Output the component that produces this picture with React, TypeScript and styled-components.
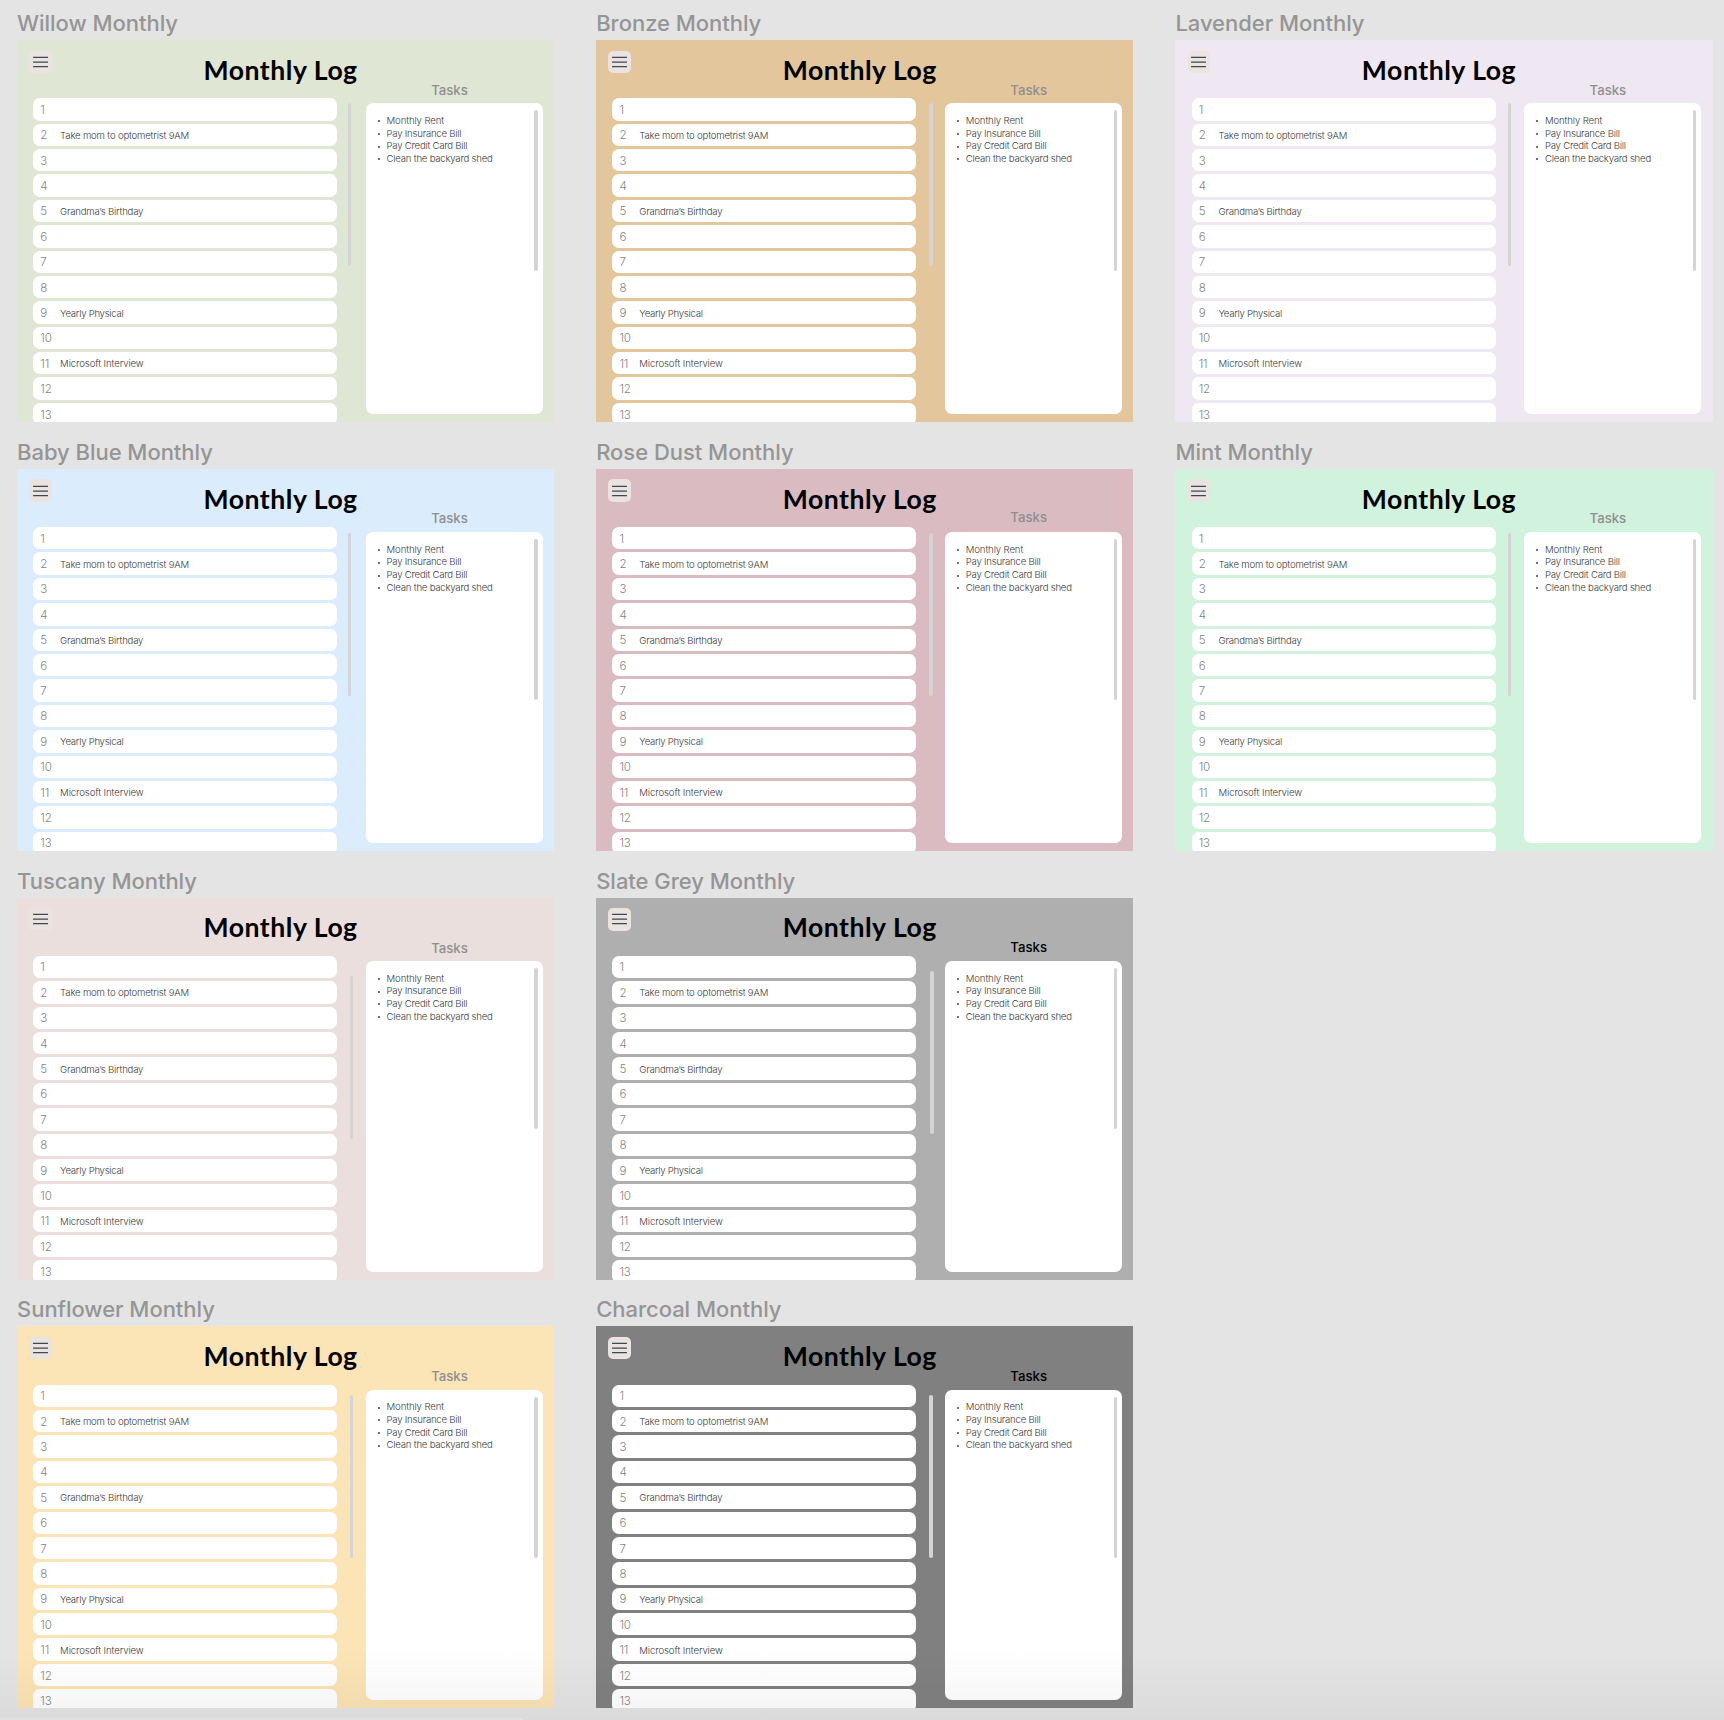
import React from "react";
import styled, { createGlobalStyle } from "styled-components";

const GlobalStyle = createGlobalStyle`
  * { box-sizing: border-box; }
  html, body { margin: 0; background: #e4e4e4; }
  body { overflow: hidden; font-family: Inter, "Liberation Sans", sans-serif; }
`;

interface Theme {
  name: string;
  color: string;
  button?: string;
  tasksColor?: string;
  tasksTop: number;
  barLeft: number;
  barTop: number;
}

const columns: Theme[][] = [
  [
    { name: "Willow Monthly", color: "#e0e6d4", tasksTop: -1, barLeft: 10.8, barTop: 5 },
    { name: "Baby Blue Monthly", color: "#dbecfd", tasksTop: -2, barLeft: 10.8, barTop: 6 },
    { name: "Tuscany Monthly", color: "#ebdfdd", tasksTop: -1, barLeft: 12.7, barTop: 20.2 },
    { name: "Sunflower Monthly", color: "#fbe4b5", tasksTop: -1, barLeft: 12.7, barTop: 10 },
  ],
  [
    { name: "Bronze Monthly", color: "#e3c69c", tasksTop: -1, barLeft: 12.7, barTop: 5 },
    { name: "Rose Dust Monthly", color: "#dabbc1", tasksTop: -2.7, barLeft: 12.7, barTop: 6.3 },
    { name: "Slate Grey Monthly", color: "#afafaf", tasksColor: "#000", tasksTop: -2, barLeft: 14, barTop: 15.2 },
    { name: "Charcoal Monthly", color: "#808080", tasksColor: "#000", tasksTop: -1, barLeft: 12.7, barTop: 10 },
  ],
  [
    { name: "Lavender Monthly", color: "#efe8f3", button: "#ebe4df", tasksTop: -1, barLeft: 12.4, barTop: 5 },
    { name: "Mint Monthly", color: "#d1f2dc", tasksTop: -2, barLeft: 12.4, barTop: 6 },
  ],
];

const entries: Record<number, { text: string; spacing: number }> = {
  2: { text: "Take mom to optometrist 9AM", spacing: -0.19 },
  5: { text: "Grandma’s Birthday", spacing: -0.2 },
  9: { text: "Yearly Physical", spacing: -0.27 },
  11: { text: "Microsoft Interview", spacing: -0.1 },
};

const tasks = [
  { text: "Monthly Rent", spacing: -0.12 },
  { text: "Pay Insurance Bill", spacing: -0.23 },
  { text: "Pay Credit Card Bill", spacing: -0.24 },
  { text: "Clean the backyard shed", spacing: -0.22 },
];

const Canvas = styled.main`
  position: relative;
  width: 1724px;
  height: 1720px;
  overflow: hidden;
  display: flex;
  align-items: flex-start;
  gap: 42px;
  padding: 8px 0 0 17px;
`;

const Column = styled.div`
  display: flex;
  flex-direction: column;
  gap: 14.8px;
  width: 537.2px;
  flex: none;
`;

const Board = styled.section`
  height: 414px;
`;

const BoardName = styled.h2`
  margin: 0;
  height: 32px;
  line-height: 30px;
  font-size: 22px;
  font-weight: 450;
  letter-spacing: -0.03px;
  color: #959595;
  white-space: nowrap;
`;

const Frame = styled.div<{ $color: string }>`
  height: 382px;
  overflow: hidden;
  background: ${(p) => p.$color};
  display: flex;
  flex-direction: column;
`;

const Header = styled.header`
  flex: none;
  height: 58.2px;
  display: flex;
  padding: 10.5px 0 0 12.2px;
`;

const MenuButton = styled.button<{ $color: string }>`
  width: 22.6px;
  height: 22.6px;
  padding: 0;
  border: 0;
  border-radius: 5px;
  background: ${(p) => p.$color};
  display: grid;
  place-items: center;
`;

const Title = styled.h1`
  margin: -0.8px 0 0 151.7px;
  font-family: Lato, sans-serif;
  font-size: 26.6px;
  font-weight: 700;
  line-height: 40px;
  letter-spacing: 0.52px;
  color: #000;
  white-space: nowrap;
`;

const Content = styled.div`
  display: flex;
  padding-left: 16.3px;
`;

const Days = styled.ol`
  list-style: none;
  margin: 0;
  padding: 0;
  width: 304px;
  flex: none;
  display: flex;
  flex-direction: column;
  gap: 3px;
`;

const Day = styled.li`
  height: 22.4px;
  flex: none;
  border-radius: 7px;
  background: #fff;
  display: flex;
  align-items: center;
  padding: 1px 0 0 7px;
`;

const DayNumber = styled.span`
  width: 19.8px;
  font-size: 11.6px;
  font-weight: 300;
  letter-spacing: -0.2px;
  color: #858585;
`;

const Entry = styled.span<{ $spacing: number }>`
  font-size: 9.6px;
  font-weight: 300;
  letter-spacing: ${(p) => p.$spacing}px;
  color: #3c3c3c;
  white-space: nowrap;
`;

const ScrollBar = styled.div<{ $left: number; $top: number; $height: number }>`
  flex: none;
  width: 3.4px;
  height: ${(p) => p.$height}px;
  margin: ${(p) => p.$top}px 0 0 ${(p) => p.$left}px;
  border-radius: 2px;
  background: #d4d4d4;
`;

const ListArea = styled.div`
  width: 332.7px;
  flex: none;
  display: flex;
`;

const TasksArea = styled.div`
  width: 177px;
  margin-top: -16.2px;
`;

const TasksHeading = styled.h3<{ $top: number; $color: string }>`
  margin: ${(p) => p.$top}px 0 ${(p) => -p.$top}px;
  padding-right: 10px;
  height: 21.2px;
  line-height: 18px;
  text-align: center;
  font-size: 13.2px;
  font-weight: 500;
  color: ${(p) => p.$color};
`;

const TasksPanel = styled.div`
  width: 177px;
  height: 310.8px;
  border-radius: 7px;
  background: #fff;
  display: flex;
  justify-content: space-between;
  padding: 0 5.2px 0 12px;
`;

const TaskList = styled.ul`
  list-style: none;
  margin: 11.8px 0 0;
  padding: 0;
`;

const Task = styled.li<{ $spacing: number }>`
  height: 12.7px;
  line-height: 12.7px;
  display: flex;
  align-items: center;
  font-size: 9.6px;
  font-weight: 300;
  letter-spacing: ${(p) => p.$spacing}px;
  color: #3c3c3c;
  white-space: nowrap;

  &::before {
    content: "";
    width: 2px;
    height: 2px;
    margin-right: 6.6px;
    border-radius: 50%;
    background: #444;
  }
`;

const BottomShade = styled.div`
  position: absolute;
  inset: auto 0 0 0;
  height: 70px;
  background: linear-gradient(to bottom, rgba(0, 0, 0, 0), rgba(0, 0, 0, 0.045));
  pointer-events: none;
`;

const BottomSheet = styled.div`
  position: absolute;
  left: 0;
  bottom: 0;
  width: 523px;
  height: 2px;
  border-top-right-radius: 2px;
  background: #e2e2e2;
`;

function MenuIcon() {
  return (
    <svg width="15" height="12" viewBox="0 0 15 12" stroke="#3c4855" strokeWidth="1.25" strokeLinecap="round">
      <path d="M0.5 1.3H14.5M0.5 6H14.5M0.5 10.7H14.5" />
    </svg>
  );
}

function MonthlyBoard({ theme }: { theme: Theme }) {
  return (
    <Board>
      <BoardName>{theme.name}</BoardName>
      <Frame $color={theme.color}>
        <Header>
          <MenuButton aria-label="Menu" $color={theme.button ?? "#ebe3e0"}>
            <MenuIcon />
          </MenuButton>
          <Title>Monthly Log</Title>
        </Header>
        <Content>
          <ListArea>
            <Days>
              {Array.from({ length: 13 }, (_, i) => i + 1).map((day) => (
                <Day key={day}>
                  <DayNumber>{day}</DayNumber>
                  {entries[day] && <Entry $spacing={entries[day].spacing}>{entries[day].text}</Entry>}
                </Day>
              ))}
            </Days>
            <ScrollBar $left={theme.barLeft} $top={theme.barTop} $height={163} />
          </ListArea>
          <TasksArea>
            <TasksHeading $top={theme.tasksTop} $color={theme.tasksColor ?? "#8f8f8f"}>
              Tasks
            </TasksHeading>
            <TasksPanel>
              <TaskList>
                {tasks.map((task) => (
                  <Task key={task.text} $spacing={task.spacing}>
                    {task.text}
                  </Task>
                ))}
              </TaskList>
              <ScrollBar $left={0} $top={7.2} $height={160.8} />
            </TasksPanel>
          </TasksArea>
        </Content>
      </Frame>
    </Board>
  );
}

export default function App() {
  return (
    <Canvas>
      <GlobalStyle />
      {columns.map((column, index) => (
        <Column key={index}>
          {column.map((theme) => (
            <MonthlyBoard key={theme.name} theme={theme} />
          ))}
        </Column>
      ))}
      <BottomShade />
      <BottomSheet />
    </Canvas>
  );
}
